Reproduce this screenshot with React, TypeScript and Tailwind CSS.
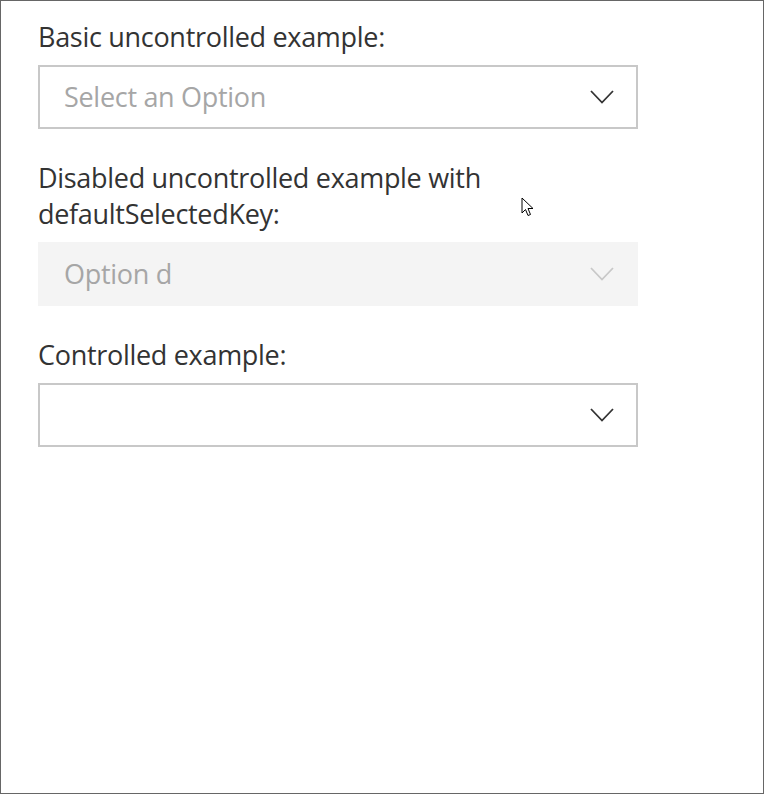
import { useState } from 'react'

const font = { fontFamily: '"Open Sans", "Noto Sans", Arial, sans-serif' }

function Chevron({ disabled }: { disabled?: boolean }) {
  return (
    <svg width="24" height="14" viewBox="0 0 24 14" className="shrink-0">
      <path
        d="M1 1 L12 12.5 L23 1"
        fill="none"
        stroke={disabled ? '#c8c8c8' : '#333333'}
        strokeWidth="1.8"
      />
    </svg>
  )
}

function Dropdown({ label, value, placeholder, disabled }: {
  label: string
  value?: string
  placeholder?: string
  disabled?: boolean
}) {
  const text = value ?? placeholder ?? ''
  return (
    <div className="flex flex-col">
      <label className="py-[10px] text-[27px] leading-[36px] tracking-[-0.3px] text-[#333333]">{label}</label>
      <div
        className={
          disabled
            ? 'h-[64px] flex items-center justify-between bg-[#f4f4f4] pl-[26px] pr-[24px]'
            : 'h-[64px] flex items-center justify-between border-2 border-[#c8c8c8] bg-white pl-[24px] pr-[22px]'
        }
      >
        <span
          className={
            value && !disabled
              ? 'text-[27px] leading-[36px] tracking-[-0.3px] text-[#333333]'
              : 'text-[27px] leading-[36px] tracking-[-0.3px] text-[#a6a6a6]'
          }
        >
          {text}
        </span>
        <Chevron disabled={disabled} />
      </div>
    </div>
  )
}

export default function App() {
  const [selected] = useState<string | undefined>(undefined)

  return (
    <div className="relative w-[764px] h-[794px] border border-[#666666] bg-white" style={font}>
      <div className="w-[600px] ml-[37px] pt-[8px] flex flex-col gap-[21px]">
        <Dropdown label="Basic uncontrolled example:" placeholder="Select an Option" />
        <Dropdown
          label="Disabled uncontrolled example with defaultSelectedKey:"
          value="Option d"
          disabled
        />
        <Dropdown label="Controlled example:" value={selected} />
      </div>

      {/* mouse pointer */}
      <svg className="absolute left-[520px] top-[196px]" width="14" height="22" viewBox="0 0 14 22">
        <path
          d="M1 1 L1 16 L4.5 12.5 L7 18.5 L9.5 17.5 L7 11.5 L12 11.5 Z"
          fill="white"
          stroke="black"
          strokeWidth="1"
          strokeLinejoin="round"
        />
      </svg>
    </div>
  )
}
